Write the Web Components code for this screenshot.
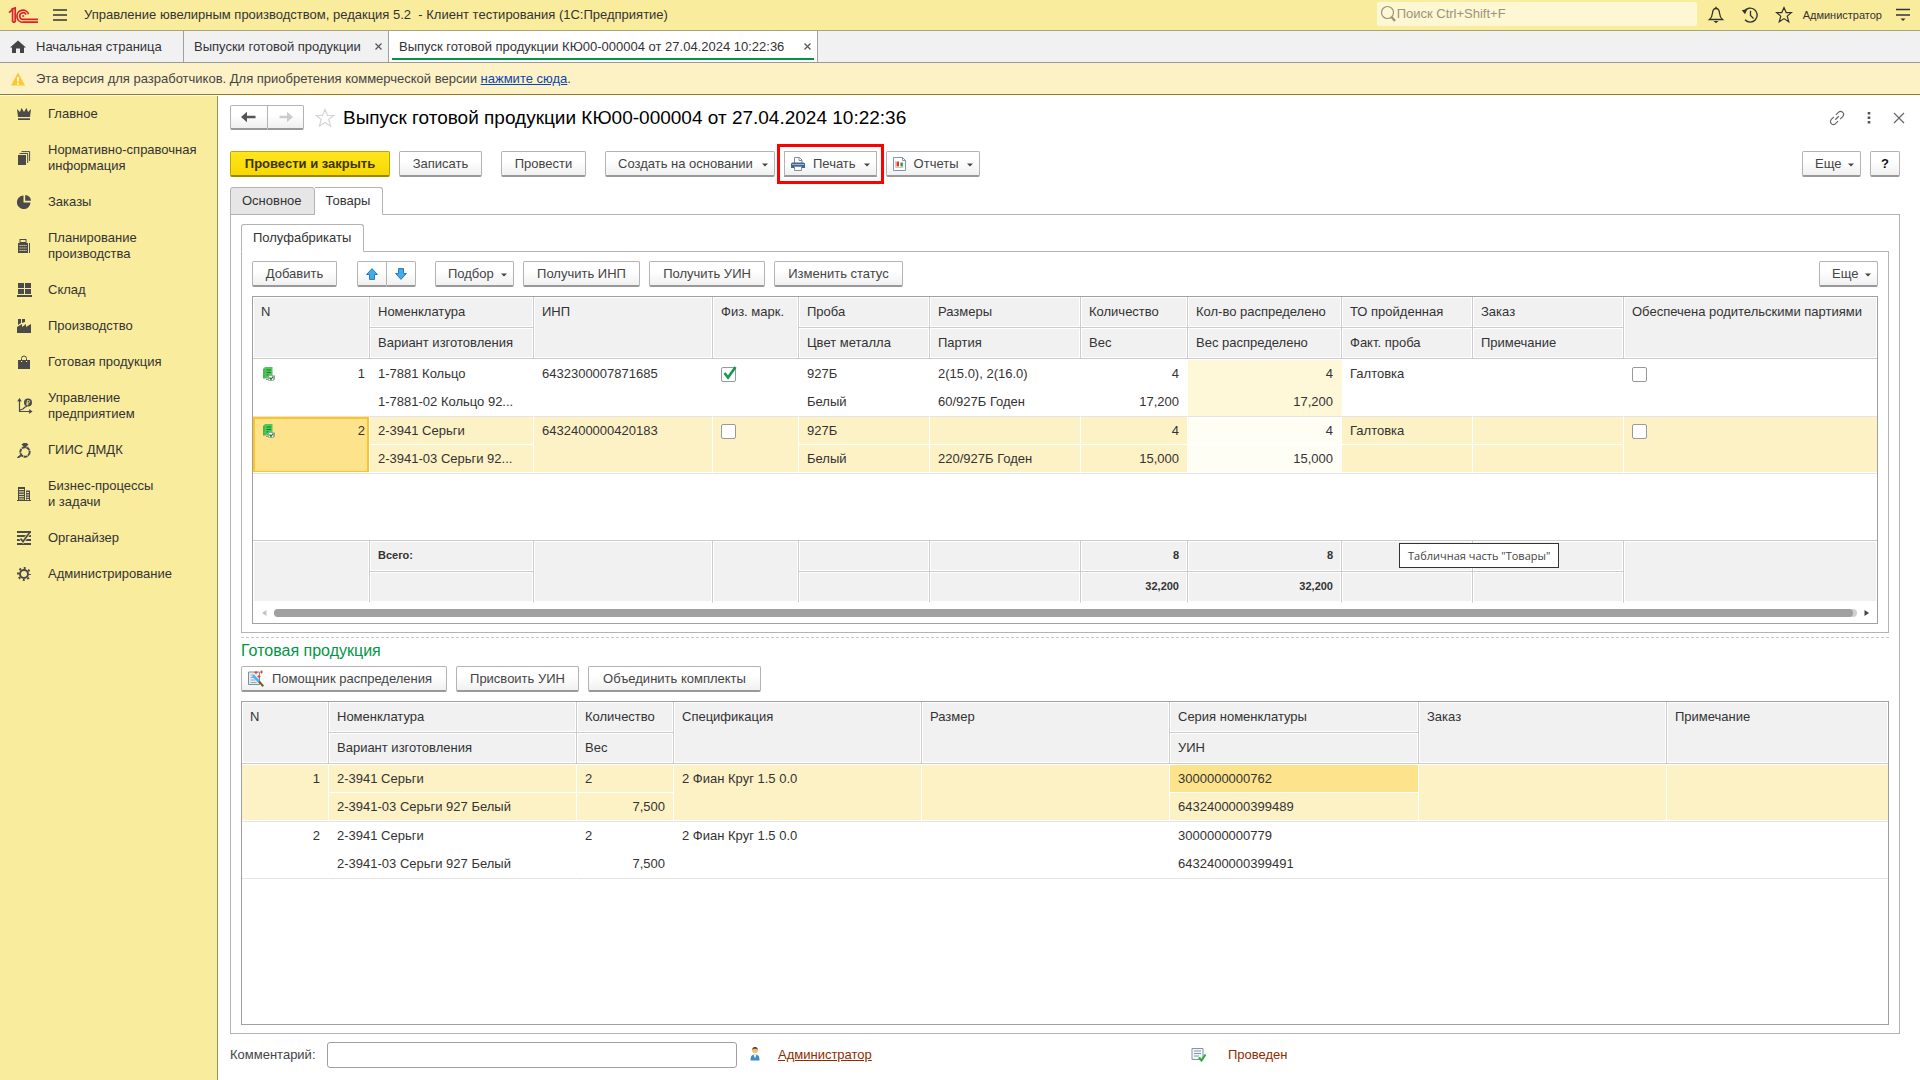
<!DOCTYPE html>
<html lang="ru">
<head>
<meta charset="utf-8">
<title>Выпуск готовой продукции</title>
<style>
html,body{margin:0;padding:0}
body{font:13px/16px "Liberation Sans",Arial,sans-serif;color:#333;background:#fff}
</style>
</head>
<body>
<erp-app></erp-app>
<script>
const RESET = `*{box-sizing:border-box}button,input{font:inherit;color:inherit;margin:0}a{color:inherit}`;

function define(name, html, setup) {
  const tpl = document.createElement('template');
  tpl.innerHTML = html;
  customElements.define(name, class extends HTMLElement {
    constructor() {
      super();
      this.attachShadow({ mode: 'open' }).appendChild(tpl.content.cloneNode(true));
    }
    connectedCallback() { if (setup) setup.call(this, this.shadowRoot); }
  });
}

/* name: [width, height, markup] */
const G = '#4a4a4a';
const ICONS = {
  logo: [31, 17, `<g fill="none" stroke="#d9232b" stroke-width="1.7"><path d="M1 5.6 4.6 2.4V15"/><path d="M3.4 2.2 7.2 .9V15"/><path d="M20.6 7.2A6 6 0 1 0 15.5 15.2H30"/><path d="M18 7.6A3.3 3.3 0 1 0 15.5 12.3H30"/><path d="M4.6 15.2h2.6M14.2 9h2"/></g>`],
  burger: [16, 14, `<path d="M1 2h14M1 7h14M1 12h14" stroke="#333" stroke-width="1.3"/>`],
  search: [18, 18, `<circle cx="8.5" cy="7.5" r="6" fill="none" stroke="#99947a" stroke-width="1.2"/><path d="m12.5 12 3.5 4" stroke="#99947a" stroke-width="2.4"/>`],
  bell: [18, 18, `<path d="M2.5 13.5h13c-2-1.6-2.6-3-2.9-6C12.400 4.500 11 2.500 9 2.500S5.600 4.500 5.400 7.500c-.3 3-.9 4.400-2.900 6z" fill="none" stroke="#333" stroke-width="1.3"/><path d="M9 .8v2" stroke="#333" stroke-width="1.4"/><path d="M6.500 15h5L9 17.200z" fill="#333"/>`],
  history: [18, 18, `<path d="M3.200 5.500A7 7 0 1 1 4 13.800" fill="none" stroke="#333" stroke-width="1.400"/><path d="M.8 4.200 6.500 3 4 8.200z" fill="#333"/><path d="M9.500 4.800V9.500l3 3" fill="none" stroke="#333" stroke-width="1.300"/>`],
  star: [18, 18, `<path d="m9 1.600 2.200 5h5.200l-4.200 3.500 1.600 5.700L9 12.600l-4.800 3.200 1.600-5.700L1.600 6.600h5.200z" fill="none" stroke="#333" stroke-width="1.200"/>`],
  favstar: [20, 20, `<path d="m10 1.500 2.500 6h6.200l-5 4 1.900 6.700L10 14.500l-5.600 3.700 1.900-6.700-5-4h6.200z" fill="none" stroke="#d4d4d4" stroke-width="1.200"/>`],
  service: [16, 14, `<path d="M1 1.500h14M1 7h14" stroke="#333" stroke-width="1.300"/><path d="M5.500 10.500h5L8 13z" fill="#333"/>`],
  home: [16, 14, `<path d="M8 .5 16 7.500h-2V13h-4V8.500H6V13H2V7.500H0z" fill="#444"/>`],
  close: [9, 9, `<path d="m1.500 1.500 6 6m0-6-6 6" stroke="#555" stroke-width="1.200"/>`],
  warn: [14, 14, `<path d="M7 .5 14 13.500H0z" fill="#fdc82f"/><path d="M7 5v4.500M7 10.800v1.600" stroke="#fff" stroke-width="1.700"/>`],
  crown: [14, 14, `<path d="M0 2l3 3 1.500-4L7 5l2.500-4L11 5l3-3-1 8H1zM1 11.200h12V13H1z" fill="${G}"/>`],
  books: [14, 14, `<path d="M1 4h8v10H1z" fill="${G}"/><path d="M2.500 2.500h8.200V12M4.500.6h8.100V10" fill="none" stroke="${G}" stroke-width="1"/>`],
  pie: [14, 14, `<path d="M6.500.5V7.500H13.500A6.800 6.800 0 1 1 6.500.5z" fill="${G}"/><path d="M8.200 0A6 6 0 0 1 14 5.800H8.200z" fill="${G}"/>`],
  calc: [14, 14, `<path d="M1 4h10v10H1zM2.500 0h7v4h-7z" fill="${G}"/><path d="M3.500 1h5v2h-5z" fill="#faec9d"/><path d="M2.500 6.500h7M2.500 9h7M2.500 11.500h7" stroke="#faec9d" stroke-width="1" stroke-dasharray="1.200 .8"/><path d="M12.500 4v10" stroke="${G}"/>`],
  boxes: [15, 14, `<path d="M1 0h6v5H1zM8 0h6v5H8zM1 6h6v5H1zM8 6h6v5H8zM0 12h15v2H0z" fill="${G}"/>`],
  factory: [14, 14, `<path d="M0 14V8l5-3v3l4-3v3l5-3v9z" fill="${G}"/><path d="M1 0h3v4L1 6zM5 0h3v3L5 4z" fill="${G}"/>`],
  bag: [14, 14, `<path d="M1 5h12v9H1z" fill="${G}"/><path d="M4.500 7V3.500a2.500 2.500 0 0 1 5 0V7" fill="none" stroke="${G}" stroke-width="1"/><path d="M4 6.500h1.200M9 6.500h1.200" stroke="#faec9d"/>`],
  growth: [16, 16, `<path d="M2.500 14V2M.8 3.500 2.500 1l1.700 2.500M2 13.500h12M12 11.800l2.500 1.700L12 15.200M3 12l3-1 2-2 2-.5" fill="none" stroke="${G}" stroke-width="1.200"/><circle cx="11" cy="4.500" r="4" fill="${G}"/><path d="M10.300 7.500v-5h1.200a1.200 1.200 0 0 1 0 2.400H9.300M9.300 6.200h2.400" fill="none" stroke="#faec9d" stroke-width=".8"/>`],
  ring: [15, 15, `<circle cx="8" cy="9" r="4.700" fill="none" stroke="${G}" stroke-width="1.900" stroke-dasharray="4 .6"/><path d="M4.500 1.500 6.500 0h3l2 1.500L8 5z" fill="${G}"/><path d="m4.500 12-4 3" stroke="${G}" stroke-width="1.800"/>`],
  building: [14, 14, `<path d="M1 0h7v14H1zM9 3.500h4V14H9z" fill="${G}"/><path d="M2 2.500h5M2 4.900h5M2 7.300h5M2 9.700h5M2 12h5M9.500 5.500H12M9.500 7.900H12M9.500 10.300H12M9.500 12.500H12" stroke="#faec9d"/><path d="M0 13.500h14" stroke="${G}"/>`],
  organizer: [14, 14, `<path d="M0 1h14M0 5h14M0 9h14M0 13h14" stroke="${G}" stroke-width="2"/><path d="M3.500 7.500 6 10.500 12 2.500" fill="none" stroke="#faec9d" stroke-width="3"/><path d="M3.500 7.500 6 10.500 13 1" fill="none" stroke="${G}" stroke-width="1.700"/>`],
  gear: [14, 14, `<circle cx="7" cy="7" r="4" fill="none" stroke="${G}" stroke-width="2"/><circle cx="7" cy="7" r="6" fill="none" stroke="${G}" stroke-width="2" stroke-dasharray="2 2.712" stroke-dashoffset="1"/>`],
  back: [16, 12, `<path d="M0 6 6 .8v3.900h8.500v2.600H6v3.900z" fill="#555"/>`],
  fwd: [16, 12, `<path d="M15 6 9 .8v3.900H1.500v2.600H9v3.900z" fill="#ccc"/>`],
  link: [16, 16, `<g fill="none" stroke="#666" stroke-width="1.200" transform="rotate(-45 8 8)"><path d="M6.500 5H3a3 3 0 0 0 0 6h3.500M9.500 5H13a3 3 0 0 1 0 6H9.500M5.500 8h5"/></g>`],
  dots: [4, 12, `<path d="M.7 0h2.600v2.600H.7zM.7 4.500h2.600v2.600H.7zM.7 9h2.600v2.600H.7z" fill="#555"/>`],
  bigclose: [12, 12, `<path d="m1 1 10 10M11 1 1 11" stroke="#666" stroke-width="1.200"/>`],
  printer: [14, 14, `<path d="M3.500 6V.5h5L11 3v3" fill="#fff" stroke="#7d8ea3"/><path d="M8 .5V3.500h3" fill="none" stroke="#7d8ea3"/><path d="M0 6.500 1.500 5.500h11L14 6.500V11H0z" fill="#3e6791"/><path d="M1 7.500h12" stroke="#9db8d2"/><path d="M3.500 9.500h7v4h-7z" fill="#fff" stroke="#7d8ea3"/>`],
  report: [13, 14, `<path d="M.5.500h9l3 3v10H.5z" fill="#fff" stroke="#8294a8"/><path d="M9.500.500v3h3" fill="none" stroke="#8294a8"/><path d="M2.500 4v6.500h8" fill="none" stroke="#b5bfca" stroke-width=".8"/><path d="M3.500 4.500H6v5H3.500z" fill="#ee3524"/><path d="M7.500 5.500H9.800v4H7.500z" fill="#18a030"/>`],
  up: [12, 12, `<path d="M6 .6 11.400 6.500H8.500V11.400H3.500V6.500H.6z" fill="#41abec" stroke="#2b7cb0"/>`],
  down: [12, 12, `<path d="M6 11.400 11.400 5.500H8.500V.6H3.500V5.500H.6z" fill="#41abec" stroke="#2b7cb0"/>`],
  caret: [6, 4, `<path d="M0 .5h6L3 3.500z" fill="#444"/>`],
  wizard: [16, 17, `<path d="M.5 2h11v12.500H.5z" fill="#e4edf5" stroke="#7d8ea3"/><path d="M2.500 5h4M2.500 7.500h3M2.500 10h5M2.500 12.500h6" stroke="#9aaabd"/><path d="m5 5.500 6.500 6.500" stroke="#4db2ee" stroke-width="2.600"/><path d="m11 11.500 4.300 4.700" stroke="#7b5a1e" stroke-width="2"/><path d="M8 1v3M6.500 2.500h3M13.500.5v3M12 2h3M11 5v3M9.500 6.500h3" stroke="#f0412a" stroke-width="1.200"/>`],
  person: [12, 16, `<path d="M1.500 14.500C1.500 10 3 8.500 6 8.500s4.500 1.500 4.500 6z" fill="#3c8dc5"/><path d="m4.500 8.500 1.500 4 1.500-4z" fill="#fff"/><path d="M3.500 4a2.500 3.200 0 0 0 5 0z" fill="#f2bf6c"/><circle cx="6" cy="4.200" r="2.600" fill="#f2bf6c"/><path d="M3.200 4a2.800 2.900 0 0 1 5.600 0L7.500 2.800h-3z" fill="#4a3a26"/>`],
  posted: [16, 14, `<path d="M1 .5h11v11H1z" fill="#f4f7fa" stroke="#8294a8"/><path d="M3 3h7M3 5.500h7M3 8h5" stroke="#8294a8"/><path d="m8 9.500 2.500 3 4-6" fill="none" stroke="#24b02e" stroke-width="2"/>`],
  rowdoc: [12, 15, `<path d="M2 0h7.500v11.500H.5V1.500z" fill="#4fc85a"/><path d="M.8 2v9.500" stroke="#2f9b3b"/><path d="M3.500 3h4.500M3.500 5.500h4.500M3.500 8h2.500" stroke="#1d7a2a"/><path d="M3 12.500h8.500V8.500" fill="none" stroke="#999"/><path d="M5.500 8.500h5v5h-5z" fill="#fff" stroke="#999" stroke-width=".8"/><path d="m6.500 10.500 1.500 2 2-3" fill="none" stroke="#0c8a1c" stroke-width="1.300"/>`],
  left: [5, 8, `<path d="M4.500 1v6L0 4z" fill="#c4c4c4"/>`],
  right: [5, 8, `<path d="M.5 1v6L5 4z" fill="#444"/>`],
  check: [16, 16, `<path d="m3.500 7 3.500 4.500L14.500 1" fill="none" stroke="#129a50" stroke-width="2.600"/>`]
};

define('ui-icon', `<style>:host{display:inline-block;flex:none;line-height:0}svg{display:block}</style><span></span>`, function (root) {
  const [w, h, body] = ICONS[this.getAttribute('name')];
  root.querySelector('span').innerHTML = `<svg width="${w}" height="${h}" viewBox="0 0 ${w} ${h}" aria-hidden="true">${body}</svg>`;
});

define('ui-button', `<style>${RESET}
:host{display:block;flex:none}
button{display:flex;align-items:center;justify-content:center;gap:8px;width:100%;min-width:var(--w,0);height:26px;padding:0 8px;white-space:nowrap;color:#444;background:linear-gradient(#fff 40%,#f0f0f0);border:1px solid #b3b3b3;border-bottom:2px solid #999;border-radius:2px}
:host([primary]) button{font-weight:bold;color:#3d3400;background:linear-gradient(#ffe51f,#f6d800);border-color:#c0a600;border-bottom-color:#9c8700}
:host([first]) button{border-radius:2px 0 0 2px}
:host([last]) button{border-left:0;border-radius:0 2px 2px 0}
:host([short]) button{height:25px}
:host([strong]) button{font-weight:bold;color:#111}
:host([marked]) button{outline:3px solid #f00;outline-offset:4px;border-radius:0}
:host([menu]) button{justify-content:flex-start;padding:0 6px 0 12px;gap:6px}
:host([pic]) button{justify-content:flex-start;padding:0 6px;gap:8px}
.caret{display:none;padding-top:3px;margin-left:auto}
:host([menu]) .caret{display:block}
</style><button type="button"><slot></slot><ui-icon class="caret" name="caret"></ui-icon></button>`, function (root) {
  if (this.hasAttribute('label')) root.querySelector('button').setAttribute('aria-label', this.getAttribute('label'));
});

define('app-bar', `<style>${RESET}
:host{display:flex;align-items:center;height:31px;background:#faec9d;border-bottom:1px solid #a9a27a;padding:0 9px 0 8px}
button{display:flex;padding:0;border:0;background:none}
.burger{margin:0 16px 0 13px}
h1{margin:0;font-size:13px;font-weight:normal;white-space:pre;flex:1}
label{display:flex;align-items:center;width:320px;height:24px;margin:0 10px 2px 0;padding-left:2px;background:#fdf7d3;border-radius:2px}
input{flex:1;min-width:0;border:0;outline:0;padding:0;background:none}
input::placeholder{color:#99947a;opacity:1}
.tools{display:flex;align-items:center;gap:16px}
.user{font-size:11px;margin:0 13px 0 10px}
</style>
<ui-icon name="logo"></ui-icon>
<button class="burger" aria-label="Меню"><ui-icon name="burger"></ui-icon></button>
<h1>Управление ювелирным производством, редакция 5.2  - Клиент тестирования (1С:Предприятие)</h1>
<label aria-label="Поиск"><ui-icon name="search"></ui-icon><input type="text" placeholder="Поиск Ctrl+Shift+F"></label>
<div class="tools">
<button aria-label="Уведомления"><ui-icon name="bell"></ui-icon></button>
<button aria-label="История"><ui-icon name="history"></ui-icon></button>
<button aria-label="Избранное"><ui-icon name="star"></ui-icon></button>
</div>
<button class="user">Администратор</button>
<button aria-label="Сервис"><ui-icon name="service"></ui-icon></button>`);

define('window-tab', `<style>${RESET}
:host{display:flex;align-items:center;gap:8px;padding:0 5px 0 10px;border-right:1px solid #a0a0a0;position:relative}
:host([home]){padding-right:18px}
:host([active]){background:#fff}
:host([active])::after{content:"";position:absolute;left:3px;right:3px;bottom:2px;height:2px;background:#009646}
button{display:flex;align-items:center;gap:10px;padding:0;border:0;background:none;white-space:nowrap}
.t{min-width:var(--w,0)}
:host([home]) .x{display:none}
</style><button class="t"><slot></slot></button><button class="x" aria-label="Закрыть"><ui-icon name="close"></ui-icon></button>`);

define('window-tabs', `<style>:host{display:flex;height:32px;background:#f1f1f1;border-bottom:1px solid #999}</style><slot></slot>`);

define('notice-bar', `<style>:host{display:flex;align-items:center;gap:11px;height:32px;padding-left:11px;background:#fdf1c6;border-bottom:1px solid #947a1c;color:#444}a{color:#0a46b0}</style>
<ui-icon name="warn"></ui-icon><span>Эта версия для разработчиков. Для приобретения коммерческой версии <a href="#">нажмите сюда</a>.</span>`);

define('nav-item', `<style>:host{display:block}
a{display:flex;align-items:center;padding:10px 8px 10px 17px;color:#333;text-decoration:none}
.i{display:flex;width:31px;height:16px;align-items:center;flex:none}
</style><a href="#"><span class="i"></span><span class="t"><slot></slot></span></a>`, function (root) {
  const icon = document.createElement('ui-icon');
  icon.setAttribute('name', this.getAttribute('icon'));
  root.querySelector('.i').replaceChildren(icon);
});

define('side-nav', `<style>:host{display:block;width:218px;flex:none;box-sizing:border-box;background:#faec9d;border-right:1px solid #96905e}</style>
<nav>
<nav-item icon="crown">Главное</nav-item>
<nav-item icon="books">Нормативно-справочная<br>информация</nav-item>
<nav-item icon="pie">Заказы</nav-item>
<nav-item icon="calc">Планирование<br>производства</nav-item>
<nav-item icon="boxes">Склад</nav-item>
<nav-item icon="factory">Производство</nav-item>
<nav-item icon="bag">Готовая продукция</nav-item>
<nav-item icon="growth">Управление<br>предприятием</nav-item>
<nav-item icon="ring">ГИИС ДМДК</nav-item>
<nav-item icon="building">Бизнес-процессы<br>и задачи</nav-item>
<nav-item icon="organizer">Органайзер</nav-item>
<nav-item icon="gear">Администрирование</nav-item>
</nav>`);

define('form-title', `<style>${RESET}
:host{display:flex;align-items:center}
.nav{display:flex;margin-right:11px}
button.p{display:flex;padding:0;border:0;background:none}
h2{margin:0 auto 0 8px;font-size:19px;line-height:24px;font-weight:normal;color:#000}
.tools{display:flex;align-items:center;gap:22px}
</style>
<div class="nav"><ui-button first short label="Назад" style="--w:38px"><ui-icon name="back"></ui-icon></ui-button><ui-button last short label="Вперед" style="--w:36px"><ui-icon name="fwd"></ui-icon></ui-button></div>
<button class="p" aria-label="В избранное"><ui-icon name="favstar"></ui-icon></button>
<h2><slot></slot></h2>
<div class="tools">
<button class="p" aria-label="Ссылка"><ui-icon name="link"></ui-icon></button>
<button class="p" aria-label="Еще"><ui-icon name="dots"></ui-icon></button>
<button class="p" aria-label="Закрыть"><ui-icon name="bigclose"></ui-icon></button>
</div>`);

define('command-bar', `<style>:host{display:flex;gap:9px}</style><slot></slot>`);

define('tab-panel', `<style>${RESET}
:host{display:flex;flex-direction:column}
.tabs{display:flex;margin-bottom:-1px;position:relative}
button{height:28px;padding:0 12px 0 11px;border:1px solid #b3b3b3;border-left-width:0;border-radius:0 3px 0 0;background:#e6e6e6}
button:first-child{border-left-width:1px;border-radius:3px 3px 0 0}
button.on{background:#fff;border-bottom-color:#fff}
.body{flex:1;display:flex;flex-direction:column;border:1px solid #b3b3b3;padding:9px 10px 8px}
</style><div class="tabs" role="tablist"></div><div class="body"><slot></slot></div>`, function (root) {
  const active = +this.getAttribute('active');
  this.getAttribute('tabs').split('|').forEach((text, i) => {
    const b = document.createElement('button');
    b.textContent = text;
    b.setAttribute('role', 'tab');
    b.setAttribute('aria-selected', i === active);
    if (i === active) b.className = 'on';
    root.querySelector('.tabs').append(b);
  });
});

/* Grid whose records take two lines; a column with one title spans both. */
class DataGrid extends HTMLElement {
  constructor() { super(); this.attachShadow({ mode: 'open' }); }
  connectedCallback() { this.render(GRIDS[this.getAttribute('source')]); }
  cell(tag, span, cls, content) {
    return `<${tag}${span ? ' rowspan="2"' : ''} class="${cls}">${content ?? ''}</${tag}>`;
  }
  value(v, title) {
    if (v === true || v === false)
      return `<span class="cb"><input type="checkbox" aria-label="${title}"${v ? ' checked' : ''}>${v ? '<ui-icon name="check"></ui-icon>' : ''}</span>`;
    return v;
  }
  pair(cols, tag, get, cls) {
    const line = k => cols.map((c, i) => {
      const span = !c.title[1];
      if (k && span) return '';
      return this.cell(tag, span, cls(c, i, k), get(c, i, k));
    }).join('');
    return `<tr class="l1">${line(0)}</tr><tr class="l2">${line(1)}</tr>`;
  }
  render({ cols, rows, totals }) {
    const group = `<colgroup>${cols.map(c => `<col${c.w ? ` style="width:${c.w}px"` : ''}>`).join('')}</colgroup>`;
    const head = this.pair(cols, 'th', (c, i, k) => c.title[k], () => '');
    const body = rows.map(r => `<tbody class="${r.selected ? 'sel' : ''}">` + this.pair(cols, 'td',
      (c, i, k) => {
        const v = (r.cells[i] || [])[k];
        return (i === 0 && r.icon ? '<ui-icon name="rowdoc"></ui-icon>' : '') + (v === undefined ? '' : this.value(v, c.title[0]));
      },
      (c, i, k) => `${(c.right || [])[k] ? 'r' : ''} ${c.tint ? 'tint' : ''} ${r.current && r.current[0] === i && r.current[1] === k ? (r.framed ? 'cur framed' : 'cur') : ''} ${i === 0 && r.icon ? 'num' : ''}`) + '</tbody>').join('');
    const foot = totals ? `<table class="foot">${group}<tbody>${this.pair(cols, 'td', (c, i, k) => (totals[i] || [])[k], c => c.right ? 'r' : '')}</tbody></table>
      <div class="scroll"><ui-icon name="left"></ui-icon><div class="track"><div class="thumb"></div></div><ui-icon name="right"></ui-icon></div>` : '';
    this.shadowRoot.innerHTML = `<style>${RESET}
:host{display:flex;flex-direction:column;border:1px solid #a0a0a0;background:#fff;min-width:0}
table{width:100%;table-layout:fixed;border-collapse:separate;border-spacing:0}
th,td{padding:0 8px;text-align:left;vertical-align:top;font-weight:normal;white-space:nowrap;overflow:hidden;text-overflow:ellipsis}
th,.foot td{height:31px;line-height:29px;background:#f1f1f1;border-right:1px solid #ccc;border-bottom:1px solid #ccc;box-shadow:inset 0 0 0 1px #fff}
tr.l1>:last-child[rowspan]{border-right:0}
th[rowspan],.foot td[rowspan]{height:62px}
.grid td{line-height:27px;border-right:1px solid transparent;border-bottom:1px solid transparent;height:28px}
.grid .l2 td{height:29px;line-height:28px;border-bottom-color:#e4e4e4}
.grid td[rowspan]{height:57px;border-bottom-color:#e4e4e4}
.grid thead+tbody .l1 td{border-top:1px solid #fff;height:29px}
.grid thead+tbody .l1 td[rowspan]{height:58px}
.sel td{background:#fdf1c6}
.grid .sel td{border-right-color:#fff}
.grid .sel .l1 td:not([rowspan]){border-bottom-color:#fff}
.grid .sel .l2 td,.grid .sel td[rowspan]{box-shadow:inset 0 -1px #fff}
td.tint{background:#fef8d8}
.sel td.tint{background:#fffef5}
.grid .sel td.cur{background:#fde48c}
.grid .sel td.framed{box-shadow:inset 0 -1px #fff,inset 0 0 0 2px #fcc520}
.r{text-align:right}
.num{padding-right:4px}
.num ui-icon{float:left;margin:7px 0 0 2px}
.gap{flex:1}
.foot{border-top:1px solid #ccc}
.foot td{font-weight:bold;font-size:11px}
.foot .l2 td,.foot td[rowspan]{border-bottom-color:#fff}
.scroll{display:flex;align-items:center;gap:7px;height:20px;padding:6px 8px 6px 9px}
.track{flex:1;height:8px;border-radius:4px;background:#d0d0d0;padding-right:4px}
.thumb{height:8px;border-radius:4px;background:#a0a0a0}
.cb{display:block;position:relative;width:15px;height:15px;margin-top:7px}
.cb input{appearance:none;display:block;width:15px;height:15px;border:1px solid #999;border-radius:2px;background:#fff}
.cb ui-icon{position:absolute;left:0;top:-1px}
</style><table class="grid">${group}<thead>${head}</thead>${body}</table><div class="gap"></div>${foot}`;
  }
}

const GRIDS = {
  semi: {
    cols: [
      { w: 117, title: ['N'], right: [1] },
      { w: 164, title: ['Номенклатура', 'Вариант изготовления'] },
      { w: 179, title: ['ИНП'] },
      { w: 86, title: ['Физ. марк.'] },
      { w: 131, title: ['Проба', 'Цвет металла'] },
      { w: 151, title: ['Размеры', 'Партия'] },
      { w: 107, title: ['Количество', 'Вес'], right: [1, 1] },
      { w: 154, title: ['Кол-во распределено', 'Вес распределено'], right: [1, 1], tint: true },
      { w: 131, title: ['ТО пройденная', 'Факт. проба'] },
      { w: 151, title: ['Заказ', 'Примечание'] },
      { title: ['Обеспечена родительскими партиями'] }
    ],
    rows: [
      { icon: true, cells: [['1'], ['1-7881 Кольцо', '1-7881-02 Кольцо 92...'], ['6432300007871685'], [true], ['927Б', 'Белый'], ['2(15.0), 2(16.0)', '60/927Б Годен'], ['4', '17,200'], ['4', '17,200'], ['Галтовка', ''], ['', ''], [false]] },
      { icon: true, selected: true, current: [0, 0], framed: true, cells: [['2'], ['2-3941 Серьги', '2-3941-03 Серьги 92...'], ['6432400000420183'], [false], ['927Б', 'Белый'], ['', '220/927Б Годен'], ['4', '15,000'], ['4', '15,000'], ['Галтовка', ''], ['', ''], [false]] }
    ],
    totals: [[], ['Всего:', ''], [], [], [], [], ['8', '32,200'], ['8', '32,200'], [], [], []]
  },
  goods: {
    cols: [
      { w: 87, title: ['N'], right: [1] },
      { w: 248, title: ['Номенклатура', 'Вариант изготовления'] },
      { w: 97, title: ['Количество', 'Вес'], right: [0, 1] },
      { w: 248, title: ['Спецификация'] },
      { w: 248, title: ['Размер'] },
      { w: 249, title: ['Серия номенклатуры', 'УИН'] },
      { w: 248, title: ['Заказ'] },
      { title: ['Примечание'] }
    ],
    rows: [
      { selected: true, current: [5, 0], cells: [['1'], ['2-3941 Серьги', '2-3941-03 Серьги 927 Белый'], ['2', '7,500'], ['2 Фиан Круг 1.5 0.0'], [], ['3000000000762', '6432400000399489'], [], []] },
      { cells: [['2'], ['2-3941 Серьги', '2-3941-03 Серьги 927 Белый'], ['2', '7,500'], ['2 Фиан Круг 1.5 0.0'], [], ['3000000000779', '6432400000399491'], [], []] }
    ]
  }
};
customElements.define('data-grid', DataGrid);

define('hint-tip', `<style>:host{display:block;padding:0 8px;height:25px;line-height:23px;box-sizing:border-box;border:1px solid #333;background:#fff;color:#444;font-family:"Open Sans","Noto Sans",sans-serif;font-size:11px;white-space:nowrap}</style><slot></slot>`);

define('form-footer', `<style>${RESET}
:host{display:flex;align-items:center;color:#444}
label{width:97px;flex:none}
input{width:410px;height:26px;padding:0 6px;border:1px solid #a0a0a0;border-radius:3px;outline:0;background:#fff}
a,.state{color:#8f2c00}
.who{margin:0 17px 2px 12px}
a{width:413px;flex:none}
.ok{margin-right:21px}
</style><label for="c">Комментарий:</label><input id="c" type="text"><ui-icon class="who" name="person"></ui-icon><a href="#">Администратор</a><ui-icon class="ok" name="posted"></ui-icon><span class="state">Проведен</span>`);

define('release-form', `<style>${RESET}
:host{display:flex;flex-direction:column;flex:1;min-width:0;padding:9px 20px 12px 12px}
form-title{margin-right:-5px}
.cmd{margin:21px 0 10px}
.sp{margin-left:10px}
.push{margin-left:auto}
.pair{display:flex;margin:0 10px 0 11px}
.outer{flex:1}
.wrap{position:relative;margin-top:9px}
.wrap data-grid{height:328px}
hint-tip{position:absolute;left:1147px;top:247px}
.split{height:0;border-top:1px dashed #c8c8c8;margin:4px 0 3px}
h3{margin:0 0 5px;font-size:16px;line-height:20px;font-weight:normal;color:#009646}
.goods{flex:1;margin-top:9px}
form-footer{margin-top:8px}
</style>
<form-title>Выпуск готовой продукции КЮ00-000004 от 27.04.2024 10:22:36</form-title>
<command-bar class="cmd">
<ui-button primary style="--w:160px">Провести и закрыть</ui-button>
<ui-button style="--w:83px">Записать</ui-button>
<ui-button class="sp" style="--w:85px">Провести</ui-button>
<ui-button class="sp" menu style="--w:170px">Создать на основании</ui-button>
<ui-button marked menu pic style="--w:92px"><ui-icon name="printer"></ui-icon>Печать</ui-button>
<ui-button menu pic style="--w:94px"><ui-icon name="report"></ui-icon>Отчеты</ui-button>
<ui-button class="push" menu style="--w:59px">Еще</ui-button>
<ui-button strong style="--w:30px">?</ui-button>
</command-bar>
<tab-panel class="outer" tabs="Основное|Товары" active="1">
 <tab-panel tabs="Полуфабрикаты" active="0">
  <command-bar>
   <ui-button style="--w:85px">Добавить</ui-button>
   <div class="pair"><ui-button first label="Вверх" style="--w:30px"><ui-icon name="up"></ui-icon></ui-button><ui-button last label="Вниз" style="--w:29px"><ui-icon name="down"></ui-icon></ui-button></div>
   <ui-button menu style="--w:79px">Подбор</ui-button>
   <ui-button style="--w:117px">Получить ИНП</ui-button>
   <ui-button style="--w:116px">Получить УИН</ui-button>
   <ui-button style="--w:129px">Изменить статус</ui-button>
   <ui-button class="push" menu style="--w:59px">Еще</ui-button>
  </command-bar>
  <div class="wrap"><data-grid source="semi"></data-grid><hint-tip>Табличная часть "Товары"</hint-tip></div>
 </tab-panel>
 <div class="split"></div>
 <h3>Готовая продукция</h3>
 <command-bar>
  <ui-button pic style="--w:206px"><ui-icon name="wizard"></ui-icon>Помощник распределения</ui-button>
  <ui-button style="--w:123px">Присвоить УИН</ui-button>
  <ui-button style="--w:173px">Объединить комплекты</ui-button>
 </command-bar>
 <data-grid class="goods" source="goods"></data-grid>
</tab-panel>
<form-footer></form-footer>`);

define('erp-app', `<style>${RESET}
:host{display:flex;flex-direction:column;min-height:100vh}
main{display:flex;flex:1;margin-top:1px}
</style>
<app-bar></app-bar>
<window-tabs>
<window-tab home style="--w:155px"><ui-icon name="home"></ui-icon>Начальная страница</window-tab>
<window-tab style="--w:172px">Выпуски готовой продукции</window-tab>
<window-tab active style="--w:396px">Выпуск готовой продукции КЮ00-000004 от 27.04.2024 10:22:36</window-tab>
</window-tabs>
<notice-bar></notice-bar>
<main><side-nav></side-nav><release-form></release-form></main>`);
</script>
</body>
</html>
